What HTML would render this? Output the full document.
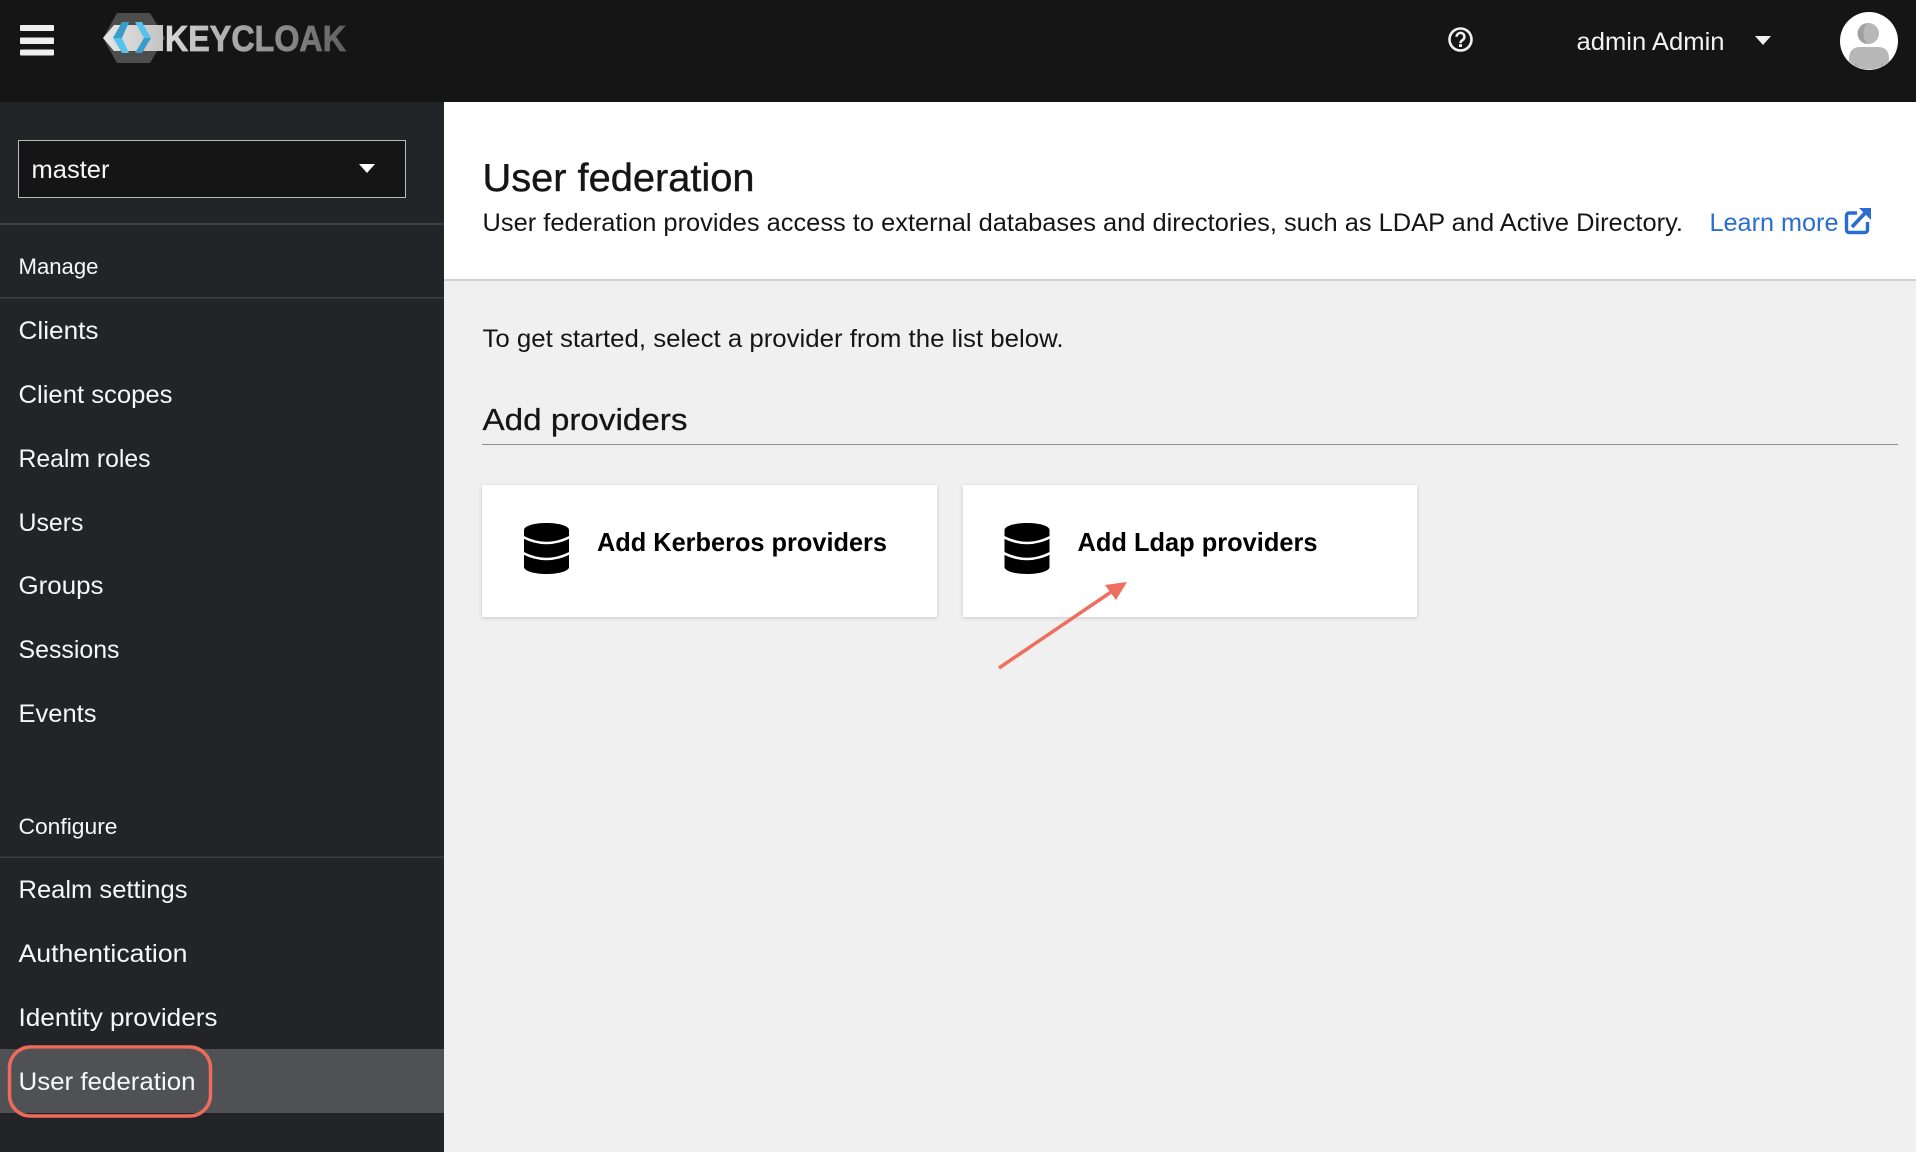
<!DOCTYPE html>
<html lang="en">
<head>
<meta charset="utf-8">
<title>Keycloak - User federation</title>
<style>
html,body{margin:0;padding:0;width:1916px;height:1152px;overflow:hidden;background:#f0f0f0}
.abs{position:absolute}
#header{left:0;top:0;width:1916px;height:102px;background:#151515}
#side{left:0;top:102px;width:444px;height:1050px;background:#222428}
#pagehead{left:444px;top:102px;width:1472px;height:177px;background:#fff;border-bottom:2px solid #d2d2d2}
.card{background:#fff;box-shadow:0 1px 4px rgba(0,0,0,.16)}
#sel{left:18px;top:140px;width:386px;height:56px;background:#151515;border:1px solid #b8bbbe}
#active{left:0;top:1049px;width:444px;height:64px;background:#4f5155}
svg{position:absolute;left:0;top:0}
text{font-family:"Liberation Sans",sans-serif}
.n{font-size:25px;fill:#f7f7f7}
.m{font-size:25px;fill:#151515}
</style>
</head>
<body>
<div class="abs" id="header"></div>
<div class="abs" id="side"></div>
<div class="abs" id="active"></div>
<div class="abs" id="pagehead"></div>
<div class="abs" id="sel"></div>
<div class="abs card" style="left:482px;top:485px;width:455px;height:132px"></div>
<div class="abs card" style="left:963px;top:485px;width:454px;height:132px"></div>

<svg width="1916" height="1152" viewBox="0 0 1916 1152" xmlns="http://www.w3.org/2000/svg">
<defs>
<linearGradient id="band" x1="0" x2="1" y1="0" y2="0"><stop offset="0" stop-color="#e6e6e6"/><stop offset="1" stop-color="#c4c4c4"/></linearGradient>
<linearGradient id="kc" gradientUnits="userSpaceOnUse" x1="166" x2="346" y1="0" y2="0"><stop offset="0" stop-color="#d8d8d8"/><stop offset="1" stop-color="#5f5f5f"/></linearGradient>
</defs>

<!-- hamburger -->
<g fill="#efefef">
<rect x="20" y="25" width="34" height="6" rx="1"/>
<rect x="20" y="37.5" width="34" height="6.5" rx="1"/>
<rect x="20" y="49.5" width="34" height="6" rx="1"/>
</g>

<!-- logo -->
<path d="M117 13H150L165 38L150 63H117L103 38Z" fill="#4d4d4d"/>
<path d="M103 38L114 25H163V51H114Z" fill="url(#band)"/>
<path d="M122 22H129L122 38H113Z" fill="#3a9ccb"/>
<path d="M113 38H122L129 53H122Z" fill="#58c2ef"/>
<path d="M135 22H142L151 38H144Z" fill="#58c2ef"/>
<path d="M144 38H151L142 53H135Z" fill="#3a9ccb"/>
<text x="165" y="51" font-size="36" font-weight="700" fill="url(#kc)" stroke="url(#kc)" stroke-width=".8" textLength="181" lengthAdjust="spacingAndGlyphs">KEYCLOAK</text>

<!-- help -->
<circle cx="1460.5" cy="39.5" r="11" fill="none" stroke="#f0f0f0" stroke-width="2.6"/>
<path d="M1456.6 36.8a3.9 3.9 0 1 1 6 3.3c-1.4.9-2.1 1.6-2.1 3" fill="none" stroke="#f0f0f0" stroke-width="2.5"/>
<rect x="1459" y="44.2" width="3" height="2.8" fill="#f0f0f0"/>

<text x="1576.500" y="50" font-size="25" fill="#f2f2f2" textLength="148" lengthAdjust="spacingAndGlyphs">admin Admin</text>
<path d="M1755 36H1771L1763 45Z" fill="#f0f0f0"/>

<!-- avatar -->
<circle cx="1869" cy="41" r="29" fill="#fff"/>
<clipPath id="av"><circle cx="1869" cy="41" r="28.5"/></clipPath>
<g clip-path="url(#av)">
<circle cx="1868.500" cy="33.500" r="10.500" fill="#b8b8b8"/>
<path d="M1868 23a10.500 10.500 0 0 0 0 21c-6-3-6-18 0-21Z" fill="#a0a0a0"/>
<path d="M1849 72V59c0-9 5-12 11-12h18c7 0 11 4 11 12v13Z" fill="#b8b8b8"/>
<path d="M1856 62l3 10h-7ZM1882 62l-3 10h7Z" fill="#a4a4a4"/>
</g>

<!-- realm selector -->
<text x="31.500" y="178" font-size="25" fill="#f7f7f7" textLength="78" lengthAdjust="spacingAndGlyphs">master</text>
<path d="M359 164H375L367 173Z" fill="#fff"/>

<!-- nav -->
<rect x="0" y="223" width="444" height="2" fill="#3c3f42"/>
<rect x="0" y="297" width="444" height="1.500" fill="#3c3f42"/>
<rect x="0" y="856.500" width="444" height="1.500" fill="#3c3f42"/>
<text class="n" style="font-size:22px" x="18.500" y="274" textLength="80" lengthAdjust="spacingAndGlyphs">Manage</text>
<text class="n" x="18.500" y="339" textLength="80" lengthAdjust="spacingAndGlyphs">Clients</text>
<text class="n" x="18.500" y="403" textLength="154" lengthAdjust="spacingAndGlyphs">Client scopes</text>
<text class="n" x="18.500" y="467" textLength="132" lengthAdjust="spacingAndGlyphs">Realm roles</text>
<text class="n" x="18.500" y="531" textLength="65" lengthAdjust="spacingAndGlyphs">Users</text>
<text class="n" x="18.500" y="594" textLength="85" lengthAdjust="spacingAndGlyphs">Groups</text>
<text class="n" x="18.500" y="658" textLength="101" lengthAdjust="spacingAndGlyphs">Sessions</text>
<text class="n" x="18.500" y="722" textLength="78" lengthAdjust="spacingAndGlyphs">Events</text>
<text class="n" style="font-size:22px" x="18.500" y="834" textLength="99" lengthAdjust="spacingAndGlyphs">Configure</text>
<text class="n" x="18.500" y="898" textLength="169" lengthAdjust="spacingAndGlyphs">Realm settings</text>
<text class="n" x="18.500" y="962" textLength="169" lengthAdjust="spacingAndGlyphs">Authentication</text>
<text class="n" x="18.500" y="1026" textLength="199" lengthAdjust="spacingAndGlyphs">Identity providers</text>
<text class="n" x="18.500" y="1090" textLength="177" lengthAdjust="spacingAndGlyphs">User federation</text>
<rect x="9.500" y="1047" width="201" height="69" rx="21" fill="none" stroke="#ee6b5b" stroke-width="3.500"/>

<!-- page header -->
<text x="482.500" y="191" font-size="39" fill="#151515" stroke="#151515" stroke-width=".4" textLength="272" lengthAdjust="spacingAndGlyphs">User federation</text>
<text class="m" x="482.500" y="231" textLength="1200.500" lengthAdjust="spacingAndGlyphs">User federation provides access to external databases and directories, such as LDAP and Active Directory.</text>
<text x="1709.500" y="231" font-size="25" fill="#2b6cd0" textLength="129" lengthAdjust="spacingAndGlyphs">Learn more</text>
<g fill="none" stroke="#2b6cd0" stroke-width="3.400">
<path d="M1857 213H1849a2.500 2.500 0 0 0-2.500 2.500V230a2.500 2.500 0 0 0 2.500 2.500H1865a2.500 2.500 0 0 0 2.500-2.500V222"/>
<path d="M1852 227L1866 212" stroke-width="3.800"/>
</g>
<path d="M1859 208H1871V220Z" fill="#2b6cd0"/>

<!-- body -->
<text class="m" x="482.500" y="347" textLength="581" lengthAdjust="spacingAndGlyphs">To get started, select a provider from the list below.</text>
<text x="482.500" y="430" font-size="31" fill="#151515" stroke="#151515" stroke-width=".3" textLength="205" lengthAdjust="spacingAndGlyphs">Add providers</text>
<rect x="482" y="444" width="1416" height="1" fill="#8f8f8f"/>

<!-- cards -->
<path d="M524 530C524 526 534 523 546.500 523S569 526 569 530V567C569 571 559 574 546.500 574S524 571 524 567Z" fill="#000"/>
<path d="M523 537Q546.500 549 570 537M523 553Q546.500 565 570 553" fill="none" stroke="#fff" stroke-width="2.500"/>
<path d="M1004.500 530C1004.500 526 1014.500 523 1027 523S1049.500 526 1049.500 530V567C1049.500 571 1039.500 574 1027 574S1004.500 571 1004.500 567Z" fill="#000"/>
<path d="M1003.500 537Q1027 549 1050.500 537M1003.500 553Q1027 565 1050.500 553" fill="none" stroke="#fff" stroke-width="2.500"/>
<text x="597" y="551" font-size="26" font-weight="700" fill="#000" textLength="290" lengthAdjust="spacingAndGlyphs">Add Kerberos providers</text>
<text x="1077.500" y="551" font-size="26" font-weight="700" fill="#000" textLength="240" lengthAdjust="spacingAndGlyphs">Add Ldap providers</text>

<!-- arrow -->
<path d="M999 668L1114 590" stroke="#ee6f5e" stroke-width="3.500" fill="none"/>
<path d="M1127 582L1105 585L1116 600Z" fill="#ee6f5e"/>
</svg>
</body>
</html>
